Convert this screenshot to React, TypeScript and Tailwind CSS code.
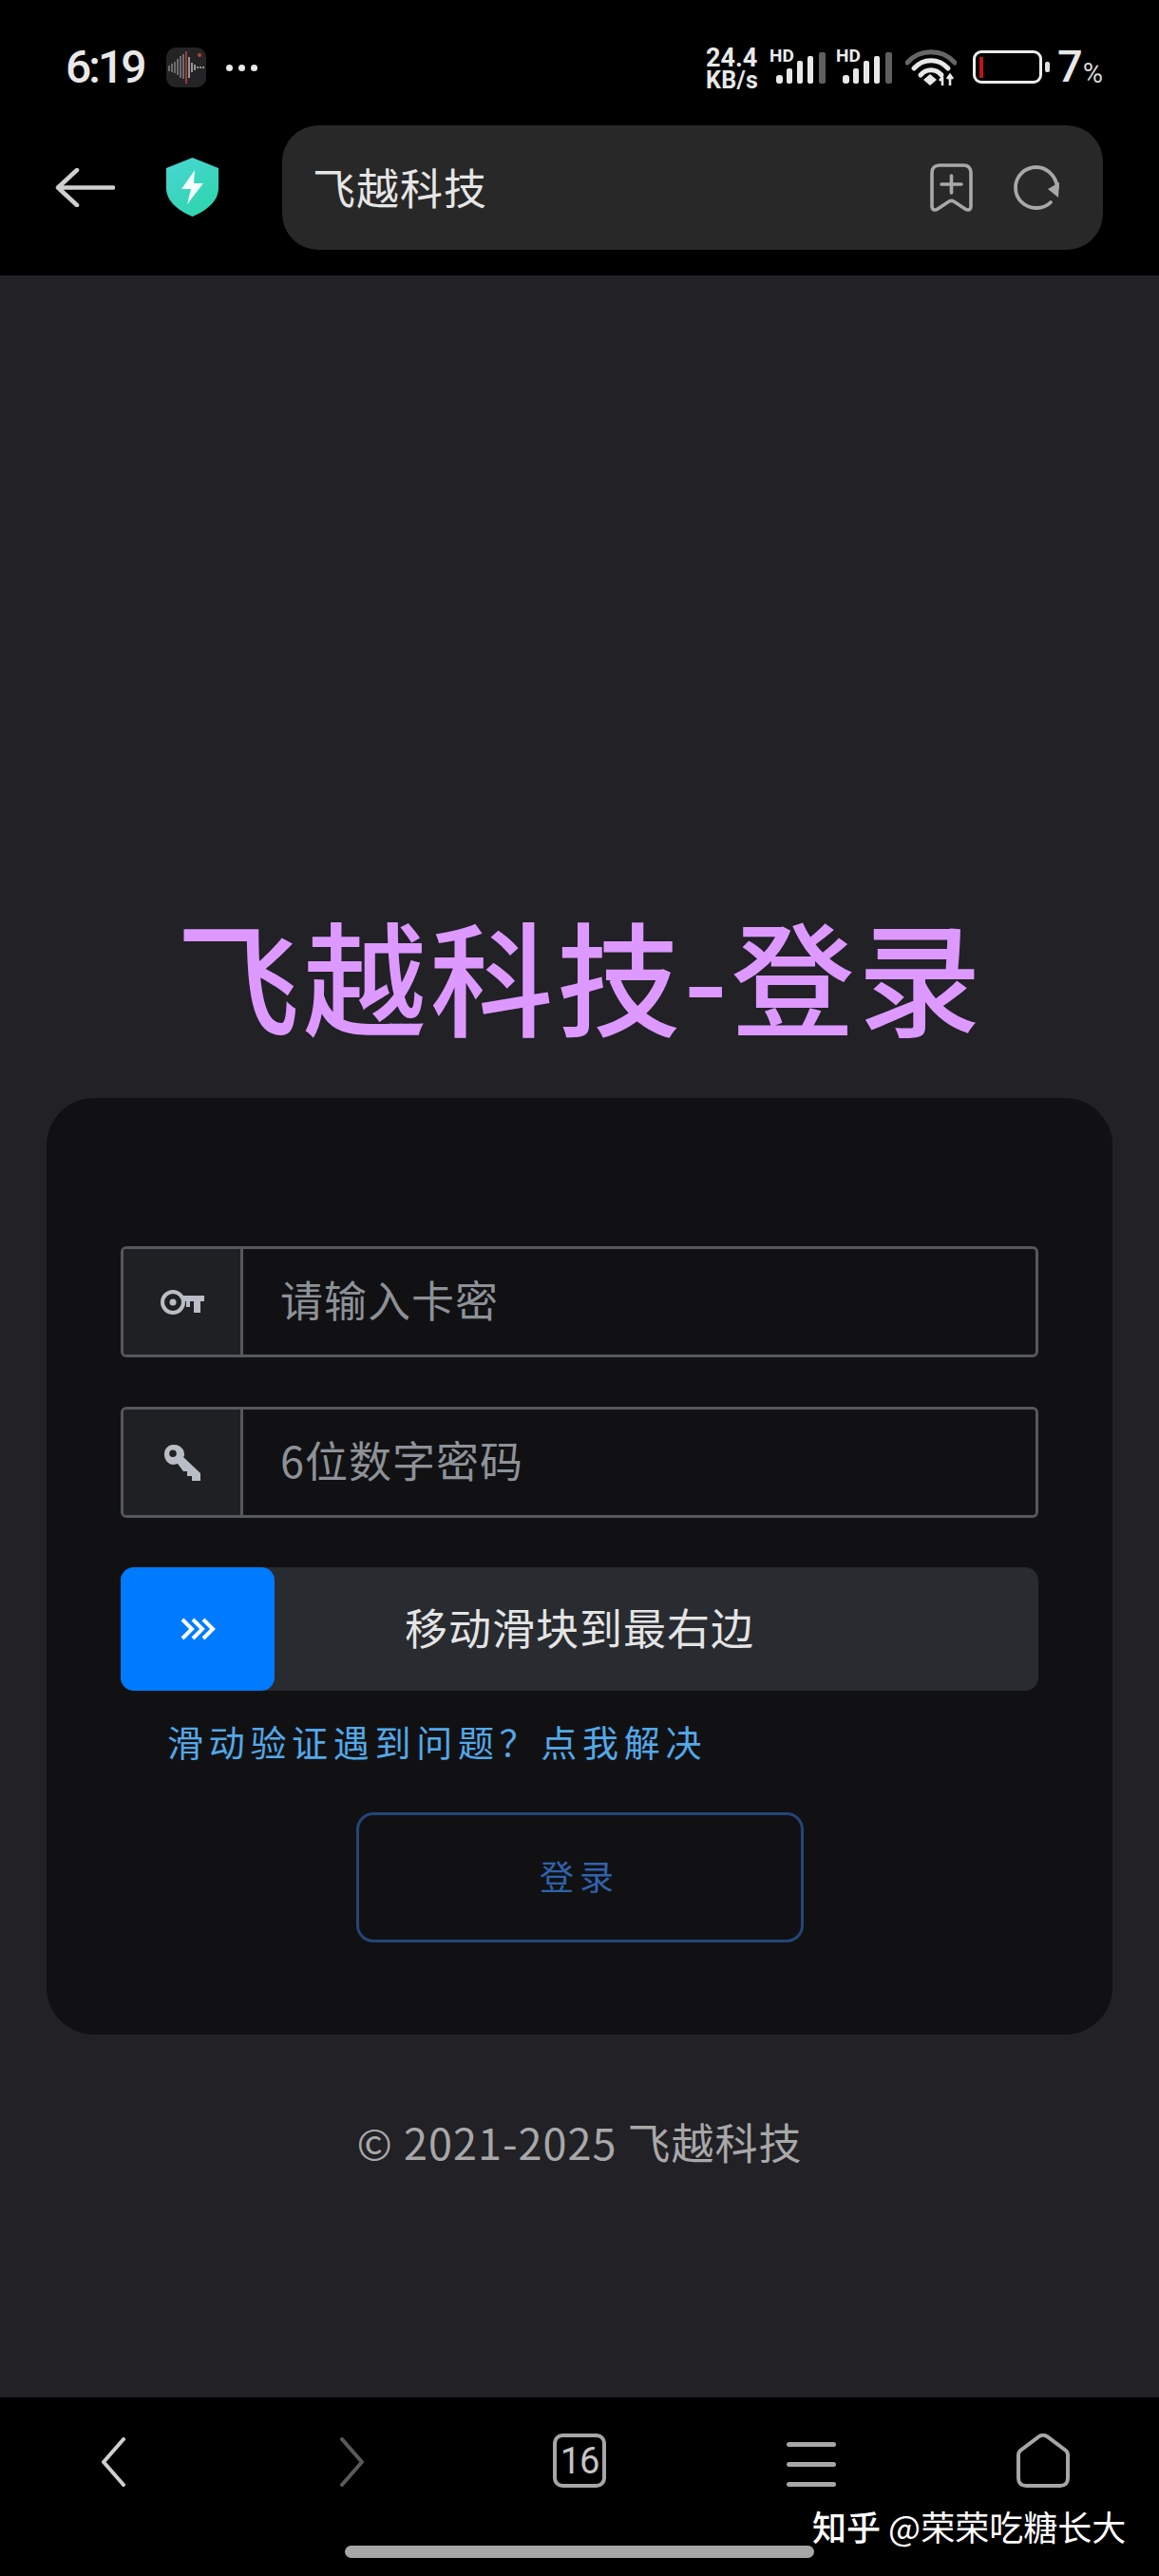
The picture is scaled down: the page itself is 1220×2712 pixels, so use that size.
const cjk = "font-['Noto_Sans_CJK_SC','Noto_Sans',sans-serif]"

function SignalIcon() {
  return (
    <div className="relative h-[40px] w-[58px]">
      <span className="absolute left-[-1px] top-[-4px] font-['Roboto',sans-serif] text-[19px] font-bold leading-[19px] text-[#ececec]">HD</span>
      <svg viewBox="0 0 52 33" className="absolute left-[6px] top-[2px] h-[33px] w-[52px]">
        <rect x="0" y="24" width="7" height="9" rx="3" fill="#e8e8e8" />
        <rect x="11" y="17" width="6" height="16" rx="2" fill="#e8e8e8" />
        <rect x="22" y="9" width="6" height="24" rx="2" fill="#e8e8e8" />
        <rect x="45" y="0" width="7" height="33" rx="2" fill="#5e5e5e" />
        <rect x="33" y="4" width="6" height="29" rx="2" fill="#e8e8e8" />
      </svg>
    </div>
  )
}

function StatusBar() {
  return (
    <div className="flex h-[132px] items-start justify-between pl-[69px] pr-[59px] pt-[50px]">
      <div className="flex items-center">
        <span className="w-[85px] font-['Roboto',sans-serif] text-[48px] font-medium leading-[42px] tracking-[-3px] text-[#e8e8e8]">6:19</span>
        <svg viewBox="0 0 42 42" className="ml-[21px] h-[42px] w-[42px]">
          <rect width="42" height="42" rx="10" fill="#242426" />
          <g stroke="#9a9a9a" strokeWidth="1.2">
            <path d="M3 19v6M6 17v9M9 15v12M12 12v17M15 9v23M18 7v26" />
          </g>
          <path d="M21 4v34" stroke="#b5413a" strokeWidth="1.6" />
          <g stroke="#e0e0e0" strokeWidth="1.2">
            <path d="M24 10v22M27 16v10M30 18v6M33 20v2M36 20v2M39 20v2" />
          </g>
          <circle cx="35" cy="8" r="2" fill="#b5413a" />
        </svg>
        <div className="ml-[21px] flex gap-[6px]">
          <span className="h-[7px] w-[7px] rounded-full bg-[#e8e8e8]" />
          <span className="h-[7px] w-[7px] rounded-full bg-[#e8e8e8]" />
          <span className="h-[7px] w-[7px] rounded-full bg-[#e8e8e8]" />
        </div>
      </div>
      <div className="flex items-start">
        <div className="ml-[-1px] flex w-[68px] flex-col font-['Roboto',sans-serif] font-bold text-[#e8e8e8]">
          <span className="text-[27px] leading-[23px]">24.4</span>
          <span className="text-[25px] leading-[23px] tracking-[0.3px]">KB/s</span>
        </div>
        <div className="mt-[3px]"><SignalIcon /></div>
        <div className="ml-[12px] mt-[3px]"><SignalIcon /></div>
        <svg viewBox="0 0 54 38" className="ml-[14px] mt-[2px] h-[38px] w-[54px]">
          <path d="M2 14C15 -1 39 -1 52 14" fill="none" stroke="#666" strokeWidth="5" strokeLinecap="round" />
          <path d="M9 20C19 9 35 9 45 20" fill="none" stroke="#e8e8e8" strokeWidth="5" strokeLinecap="round" />
          <path d="M16 27C22 20 32 20 38 27" fill="none" stroke="#e8e8e8" strokeWidth="5" strokeLinecap="round" />
          <path d="M19 32L26 26L33 32L26 38Z" fill="#e8e8e8" />
          <path d="M39 38V29M36 33L39 29M47 38V28M44 31L47 27L50 31" fill="none" stroke="#e8e8e8" strokeWidth="2.6" />
        </svg>
        <div className="ml-[17px] mt-[3px] flex items-center">
          <div className="flex h-[35px] w-[73px] items-center rounded-[9px] border-[3px] border-[#ececec] pl-[4px]">
            <span className="h-[22px] w-[4px] bg-[#c01414]" />
          </div>
          <span className="ml-[3px] h-[11px] w-[5px] rounded-[2px] bg-[#e0e0e0]" />
        </div>
        <span className="ml-[8px] mt-[-3px] font-['Roboto',sans-serif] text-[47px] font-medium leading-[46px] text-[#e8e8e8]">7</span>
        <span className="mt-[13px] font-['Roboto',sans-serif] text-[29px] leading-[28px] text-[#d8d8d8]">%</span>
      </div>
    </div>
  )
}

function Toolbar() {
  return (
    <div className="flex h-[158px] items-start pl-[58px] pr-[58px]">
      <svg viewBox="0 0 63 41" className="mt-[45px] h-[41px] w-[63px]">
        <path d="M61 20.5H3M23 2L3 20.5L23 39" fill="none" stroke="#cfcfcf" strokeWidth="4.5" strokeLinecap="round" strokeLinejoin="round" />
      </svg>
      <svg viewBox="0 0 55 62" className="ml-[54px] mt-[34px] h-[62px] w-[55px]">
        <defs>
          <linearGradient id="shield" x1="0" y1="0" x2="0.6" y2="1">
            <stop offset="0" stopColor="#4ad6d4" />
            <stop offset="1" stopColor="#30d5ae" />
          </linearGradient>
        </defs>
        <path d="M27.5 0L55 11V32C55 46 42 56 27.5 62C13 56 0 46 0 32V11Z" fill="url(#shield)" />
        <path d="M30 13L16 33H26L22 49L39 27H29Z" fill="#f2fffb" />
      </svg>
      <div className="ml-[67px] mr-[1px] flex h-[131px] flex-1 items-center rounded-[38px] bg-[#282828] pl-[32px] pr-[45px]">
        <span className="flex-1 pb-[2px] text-[45px] leading-[60px] tracking-[1px] text-[#e6e6e6]">飞越科技</span>
        <svg viewBox="0 0 45 51" className="h-[51px] w-[45px]">
          <path d="M2 10C2 5 5 2 10 2H35C40 2 43 5 43 10V45C43 49 40 50 37 48L25 40C23 39 22 39 20 40L8 48C5 50 2 49 2 45Z" fill="none" stroke="#a8a8a8" strokeWidth="3.6" />
          <path d="M22.5 13V31M12 22H33" stroke="#a8a8a8" strokeWidth="3.6" strokeLinecap="round" />
        </svg>
        <svg viewBox="0 0 49 47" className="ml-[43px] h-[47px] w-[49px]">
          <path d="M46 23C44 10 34 2 24 2C12 2 2 11 2 23.5C2 36 12 45 24 45C30 45 35 43 39 39" fill="none" stroke="#a8a8a8" strokeWidth="3.8" strokeLinecap="round" />
          <path d="M36 25L48 18L47 34Z" fill="#a8a8a8" />
        </svg>
      </div>
    </div>
  )
}

function KeyOutline() {
  return (
    <svg viewBox="0 0 46 26" className="h-[26px] w-[46px]">
      <circle cx="13" cy="13" r="11" fill="none" stroke="#b9bec6" strokeWidth="4" />
      <circle cx="13" cy="13" r="3.5" fill="#b9bec6" />
      <path d="M23 6H46V12H42V24H35V12H31V18H27V12H23Z" fill="#b9bec6" />
    </svg>
  )
}

function KeyFilled() {
  return (
    <svg viewBox="0 0 38 38" className="h-[38px] w-[38px]">
      <path fillRule="evenodd" d="M10 0C16 0 21 4 21 10C21 11 21 12 20 13L38 30V38H29V33H24V28H20L14 20C13 20 11 21 10 21C4 21 0 16 0 10C0 4 4 0 10 0ZM9 5.5A3.8 3.8 0 1 0 9 13.1A3.8 3.8 0 1 0 9 5.5Z" fill="#b9bec6" />
    </svg>
  )
}

function Field({ icon, placeholder }: { icon: React.ReactNode; placeholder: string }) {
  return (
    <div className="flex h-[117px] overflow-hidden rounded-[6px] border-[3px] border-[#55585c]">
      <div className="flex w-[126px] shrink-0 items-center justify-center border-r-[3px] border-[#55585c] bg-[#1e2023]">
        {icon}
      </div>
      <input
        readOnly
        placeholder={placeholder}
        className="min-w-0 flex-1 bg-transparent pb-[5px] pl-[39px] text-[45px] tracking-[1px] outline-none placeholder:text-[#8d9298]"
      />
    </div>
  )
}

function LoginCard() {
  return (
    <div className="mx-[49px] mt-[67px] rounded-[50px] bg-[#111113] px-[78px] pb-[97px] pt-[156px]">
      <div className="flex flex-col gap-[52px]">
        <Field icon={<KeyOutline />} placeholder="请输入卡密" />
        <Field icon={<KeyFilled />} placeholder="6位数字密码" />
        {/* slider */}
        <div className="relative flex h-[130px] items-center justify-center rounded-[14px] bg-[#282b30]">
          <div className="absolute inset-y-0 left-0 flex w-[162px] items-center justify-center rounded-[14px] bg-[#007bff]">
            <svg viewBox="0 0 37 24" className="h-[24px] w-[37px]">
              <path d="M2 2L12 12L2 22M13 2L23 12L13 22M24 2L34 12L24 22" fill="none" stroke="#ffffff" strokeWidth="4" />
            </svg>
          </div>
          <span className="pb-[5px] text-[45px] leading-[60px] tracking-[1px] text-[#e4e4e4]">移动滑块到最右边</span>
        </div>
      </div>
      <p className="mt-[28px] pl-[49px] text-[38px] leading-[50px] tracking-[5.7px] text-[#54a8e8]">滑动验证遇到问题？点我解决</p>
      <button
        type="button"
        className="mx-auto mt-[50px] block h-[137px] w-[471px] rounded-[18px] border-[3px] border-[#24457a] pb-[6px] text-[36px] tracking-[6px] text-[#2f62ab]"
      >
        登录
      </button>
    </div>
  )
}

function BottomNav() {
  return (
    <div className="relative grid h-[188px] grid-cols-5 items-start justify-items-center bg-black pt-[38px]">
      <svg viewBox="0 0 26 52" className="mr-[6px] mt-[4px] h-[52px] w-[26px]">
        <path d="M24 2L3 26L24 50" fill="none" stroke="#cfcfcf" strokeWidth="4" strokeLinecap="round" strokeLinejoin="round" />
      </svg>
      <svg viewBox="0 0 27 52" className="ml-[8px] mt-[4px] h-[52px] w-[27px]">
        <path d="M3 2L24 26L3 50" fill="none" stroke="#5a5a5a" strokeWidth="4" strokeLinecap="round" strokeLinejoin="round" />
      </svg>
      <div className="flex h-[57px] w-[56px] items-center justify-center rounded-[10px] border-[4px] border-[#a6a6a6] font-['Roboto',sans-serif] text-[38px] leading-none tracking-[-1px] text-[#c4c4c4]">16</div>
      <div className="mt-[9px] flex w-[52px] flex-col gap-[16px]">
        <span className="h-[5px] rounded-full bg-[#a6a6a6]" />
        <span className="h-[5px] rounded-full bg-[#a6a6a6]" />
        <span className="h-[5px] rounded-full bg-[#a6a6a6]" />
      </div>
      <svg viewBox="0 0 56 57" className="h-[57px] w-[56px]">
        <path d="M2 22C2 20 3 19 4 18L24 3C26.5 1.5 29.5 1.5 32 3L52 18C53 19 54 20 54 22V47C54 52 51 55 46 55H10C5 55 2 52 2 47Z" fill="none" stroke="#a6a6a6" strokeWidth="4" />
      </svg>
      <span className="absolute left-[363px] top-[156px] h-[13px] w-[494px] rounded-full bg-[#a6a6a6]" />
      <span className="absolute left-[855px] top-[115px] text-[36px] leading-[40px] text-white">
        <span className="font-medium">知乎</span> @荣荣吃糖长大
      </span>
    </div>
  )
}

export default function App() {
  return (
    <div className={`flex h-[2712px] w-[1220px] flex-col bg-black ${cjk}`}>
      <StatusBar />
      <Toolbar />
      <main className="flex-1 bg-[#212126] pt-[669px]">
        <h1 className="pl-[2px] text-center text-[130px] font-medium leading-[130px] tracking-[3.5px] text-[#dd99ff]">飞越科技-登录</h1>
        <LoginCard />
        <p className="mt-[83px] text-center text-[45px] leading-[60px] tracking-[1px] text-[#a8a8a8]">© 2021-2025 飞越科技</p>
      </main>
      <BottomNav />
    </div>
  )
}
